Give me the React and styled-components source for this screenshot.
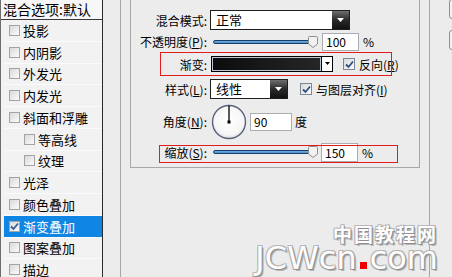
import React from 'react';
import styled, { createGlobalStyle } from 'styled-components';

const GlobalStyle = createGlobalStyle`
  html, body { margin: 0; padding: 0; background: #ececec; }
  body { font-family: "Noto Sans CJK SC", "Liberation Sans", sans-serif; }
`;

const Page = styled.div`
  position: relative;
  display: flex;
  width: 452px;
  height: 277px;
  overflow: hidden;
  background: #ececec;
  color: #000;
  font-family: "Noto Sans CJK SC", "Liberation Sans", sans-serif;
`;

/* ---------- left style list ---------- */
const StyleList = styled.div`
  flex: 0 0 103px;
  box-sizing: border-box;
  display: flex;
  flex-direction: column;
  border-left: 1px solid #6d6d6d;
  border-right: 1px solid #2b2b2b;
  background: #f2f2f2;
`;

const ListHeader = styled.div`
  flex: 0 0 20px;
  box-sizing: border-box;
  padding-left: 2px;
  border-bottom: 1px solid #3a3a3a;
  background: #f7f7f7;
  font-size: 14px;
  line-height: 19px;
  white-space: nowrap;
`;

const ListRow = styled.div`
  flex: 0 0 21.75px;
  box-sizing: border-box;
  display: flex;
  align-items: center;
  gap: 3px;
  margin-left: 3px;
  padding-left: ${(p) => (p.$sub ? 20 : 5)}px;
  border-bottom: 1px solid #fbfbfb;
  background: ${(p) => (p.$active ? '#0f86e3' : 'transparent')};
  color: ${(p) => (p.$active ? '#fff' : '#000')};
  font-size: 13px;
  white-space: nowrap;
`;

const Check = styled.span`
  flex: 0 0 auto;
  box-sizing: border-box;
  width: ${(p) => p.$size || 11}px;
  height: ${(p) => p.$size || 11}px;
  display: inline-flex;
  align-items: center;
  justify-content: center;
  border: 1px solid ${(p) => (p.$blue ? '#7b8797' : '#a3a3a3')};
  background: linear-gradient(135deg, #d9d9d9, #fbfbfb);
`;

/* ---------- group boxes ---------- */
const OuterBox = styled.div`
  flex: 0 0 310px;
  box-sizing: border-box;
  margin-left: 17px;
  padding: 0 9px;
  border-left: 1px solid #a7a7a7;
  border-right: 1px solid #a7a7a7;
`;

const InnerBox = styled.div`
  box-sizing: border-box;
  height: 168px;
  display: flex;
  flex-direction: column;
  padding-top: 10px;
  border: 1px solid #a7a7a7;
  border-top: none;
`;

const Row = styled.div`
  position: relative;
  display: flex;
  align-items: center;
  height: ${(p) => p.$h}px;
  margin-top: ${(p) => p.$mt || 0}px;
  font-size: 12px;
  white-space: nowrap;
`;

const Label = styled.span`
  flex: 0 0 76px;
  margin-right: 3px;
  text-align: right;
`;

const Key = styled.u`
  text-decoration: underline;
  text-underline-offset: 1px;
`;

const RedMark = styled.div`
  position: absolute;
  left: ${(p) => p.$l}px;
  top: ${(p) => p.$t}px;
  width: ${(p) => p.$w}px;
  height: ${(p) => p.$h}px;
  box-sizing: border-box;
  border: 1px solid #e01c1c;
  pointer-events: none;
`;

const Select = styled.div`
  flex: 0 0 ${(p) => p.$w}px;
  box-sizing: border-box;
  display: flex;
  height: 20px;
  border: 1px solid #1e1e1e;
  background: #fff;
`;

const SelectText = styled.span`
  flex: 1;
  padding-left: 5px;
  font-size: 13px;
  line-height: 18px;
`;

const SelectButton = styled.span`
  flex: 0 0 17px;
  display: flex;
  align-items: center;
  justify-content: center;
  background: linear-gradient(#6e6e6e, #2a2a2a 50%, #111);
`;

const Slider = styled.div`
  position: relative;
  flex: 0 0 105px;
  height: 12px;
  margin-left: 3px;
`;

const Track = styled.div`
  position: absolute;
  left: 0;
  top: 4px;
  width: 97px;
  height: 4px;
  box-sizing: border-box;
  border: 1px solid #173f6a;
  border-radius: 2px;
  background: linear-gradient(#3c86cf, #8cc4f0 50%, #2466a8);
`;

const Thumb = styled.svg`
  position: absolute;
  top: 0;
`;

const Field = styled.div`
  flex: 0 0 ${(p) => p.$w}px;
  box-sizing: border-box;
  height: ${(p) => p.$h || 18}px;
  margin-left: ${(p) => p.$ml || 0}px;
  padding-left: 3px;
  border: 1px solid #a9adb3;
  background: #fff;
  font-size: 12px;
  line-height: ${(p) => (p.$h || 18) - 2}px;
`;

const Unit = styled.span`
  margin-left: ${(p) => p.$ml || 4}px;
  font-size: 12px;
`;

const GradientPreview = styled.div`
  flex: 0 0 111px;
  box-sizing: border-box;
  height: 16px;
  border: 1px solid #000;
  box-shadow: inset 0 0 0 1px #b9c4d6;
  background: linear-gradient(90deg, #0c0c0c, #262626);
`;

const SmallDrop = styled.span`
  flex: 0 0 11px;
  box-sizing: border-box;
  height: 16px;
  display: flex;
  align-items: center;
  justify-content: center;
  border: 1px solid #000;
  border-left: none;
  background: #fff;
`;

const CheckLabel = styled.span`
  display: flex;
  align-items: center;
  gap: 4px;
  margin-left: ${(p) => p.$ml}px;
  font-size: 12px;
`;

/* ---------- right edge & watermark ---------- */
const ButtonStrip = styled.div`
  flex: 0 0 auto;
  display: flex;
  flex-direction: column;
  gap: 11px;
  margin-left: 19px;
  margin-top: -1px;
`;

const DialogButton = styled.div`
  width: 60px;
  height: 18px;
  border: 1px solid #8f8f8f;
  border-radius: 3px;
  background: #f4f4f4;
`;

const Watermark = styled.div`
  position: absolute;
  right: 14px;
  bottom: 4px;
  display: flex;
  flex-direction: column;
  align-items: flex-end;
  color: #fdfdfd;
  text-shadow:
    1px 1px 0 #8e8e8e, 2px 2px 0 #b4b4b4,
    -1px -1px 0 #b8b8b8, 1px -1px 0 #b0b0b0, -1px 1px 0 #a8a8a8;
  pointer-events: none;
`;

const WatermarkCn = styled.div`
  font-family: "Noto Sans CJK SC", sans-serif;
  font-size: 19px;
  font-weight: 700;
  line-height: 18px;
  letter-spacing: 2px;
`;

const WatermarkEn = styled.div`
  display: flex;
  align-items: baseline;
  font-family: "DejaVu Sans", sans-serif;
  font-size: 32px;
  line-height: 30px;
`;

const RedDot = styled.span`
  display: inline-block;
  width: 7px;
  height: 7px;
  margin: 0 3px;
  background: #ee0000;
`;

const DownArrow = ({ color = '#fff', w = 7 }) => (
  <svg width={w} height={Math.ceil(w / 2) + 1} viewBox={`0 0 ${w} ${Math.ceil(w / 2) + 1}`}>
    <polygon points={`0,0 ${w},0 ${w / 2},${Math.ceil(w / 2)}`} fill={color} />
  </svg>
);

const Tick = ({ color = '#2b4f86' }) => (
  <svg width="9" height="9" viewBox="0 0 9 9">
    <path d="M1 4.5 L3.5 7 L8 1.5" fill="none" stroke={color} strokeWidth="1.8" />
  </svg>
);

const SliderControl = ({ pos }) => (
  <Slider>
    <Track />
    <Thumb width="10" height="12" viewBox="0 0 10 12" style={{ left: pos }}>
      <path d="M0.5 1.5 Q0.5 0.5 1.5 0.5 H8.5 Q9.5 0.5 9.5 1.5 V8 L5 11.5 L0.5 8 Z" fill="#f1f1f1" stroke="#8d8d8d" />
    </Thumb>
  </Slider>
);

const Dial = () => (
  <svg width="36" height="36" viewBox="0 0 36 36" style={{ marginLeft: 1, flex: '0 0 auto' }}>
    <defs>
      <radialGradient id="dialFill" cx="50%" cy="45%" r="55%">
        <stop offset="0%" stopColor="#ffffff" />
        <stop offset="80%" stopColor="#f6f6f6" />
        <stop offset="100%" stopColor="#d8dbe1" />
      </radialGradient>
    </defs>
    <circle cx="18" cy="18" r="16.5" fill="url(#dialFill)" stroke="#59627a" strokeWidth="1.4" />
    <line x1="18" y1="18" x2="18" y2="1.5" stroke="#000" strokeWidth="1.3" />
    <rect x="16.5" y="16.5" width="3" height="3" fill="#000" />
  </svg>
);

const items = [
  { name: '投影' },
  { name: '内阴影' },
  { name: '外发光' },
  { name: '内发光' },
  { name: '斜面和浮雕' },
  { name: '等高线', sub: true },
  { name: '纹理', sub: true },
  { name: '光泽' },
  { name: '颜色叠加' },
  { name: '渐变叠加', active: true },
  { name: '图案叠加' },
  { name: '描边' },
];

export default function App() {
  return (
    <>
      <GlobalStyle />
      <Page>
        <StyleList>
          <ListHeader>混合选项:默认</ListHeader>
          {items.map((it) => (
            <ListRow key={it.name} $sub={it.sub} $active={it.active}>
              <Check>{it.active && <Tick color="#3a5a9a" />}</Check>
              {it.name}
            </ListRow>
          ))}
        </StyleList>

        <OuterBox>
          <InnerBox>
            <Row $h={20}>
              <Label>混合模式:</Label>
              <Select $w={140}>
                <SelectText>正常</SelectText>
                <SelectButton><DownArrow /></SelectButton>
              </Select>
            </Row>

            <Row $h={17} $mt={3}>
              <Label>不透明度(<Key>P</Key>):</Label>
              <SliderControl pos={95} />
              <Field $w={37} $ml={4}>100</Field>
              <Unit>%</Unit>
            </Row>

            <Row $h={24} $mt={2}>
              <RedMark $l={29} $t={0} $w={232} $h={24} />
              <Label>渐变:</Label>
              <GradientPreview style={{ marginLeft: 1 }} />
              <SmallDrop><DownArrow color="#000" w={5} /></SmallDrop>
              <CheckLabel $ml={10}>
                <Check $size={12} $blue><Tick /></Check>
                <span>反向(<Key>R</Key>)</span>
              </CheckLabel>
            </Row>

            <Row $h={20} $mt={3}>
              <Label>样式(<Key>L</Key>):</Label>
              <Select $w={78}>
                <SelectText>线性</SelectText>
                <SelectButton><DownArrow /></SelectButton>
              </Select>
              <CheckLabel $ml={12}>
                <Check $size={12} $blue><Tick /></Check>
                <span>与图层对齐(<Key>I</Key>)</span>
              </CheckLabel>
            </Row>

            <Row $h={35} $mt={5}>
              <Label>角度(<Key>N</Key>):</Label>
              <Dial />
              <Field $w={42} $ml={3}>90</Field>
              <Unit $ml={3}>度</Unit>
            </Row>

            <Row $h={20} $mt={3}>
              <RedMark $l={28} $t={3} $w={239} $h={18} />
              <Label>缩放(<Key>S</Key>):</Label>
              <SliderControl pos={95} />
              <Field $w={37} $h={19} $ml={3}>150</Field>
              <Unit>%</Unit>
            </Row>
          </InnerBox>
        </OuterBox>

        <ButtonStrip>
          <DialogButton />
          <DialogButton />
        </ButtonStrip>

        <Watermark>
          <WatermarkCn>中国教程网</WatermarkCn>
          <WatermarkEn>JCWcn<RedDot />com</WatermarkEn>
        </Watermark>
      </Page>
    </>
  );
}
